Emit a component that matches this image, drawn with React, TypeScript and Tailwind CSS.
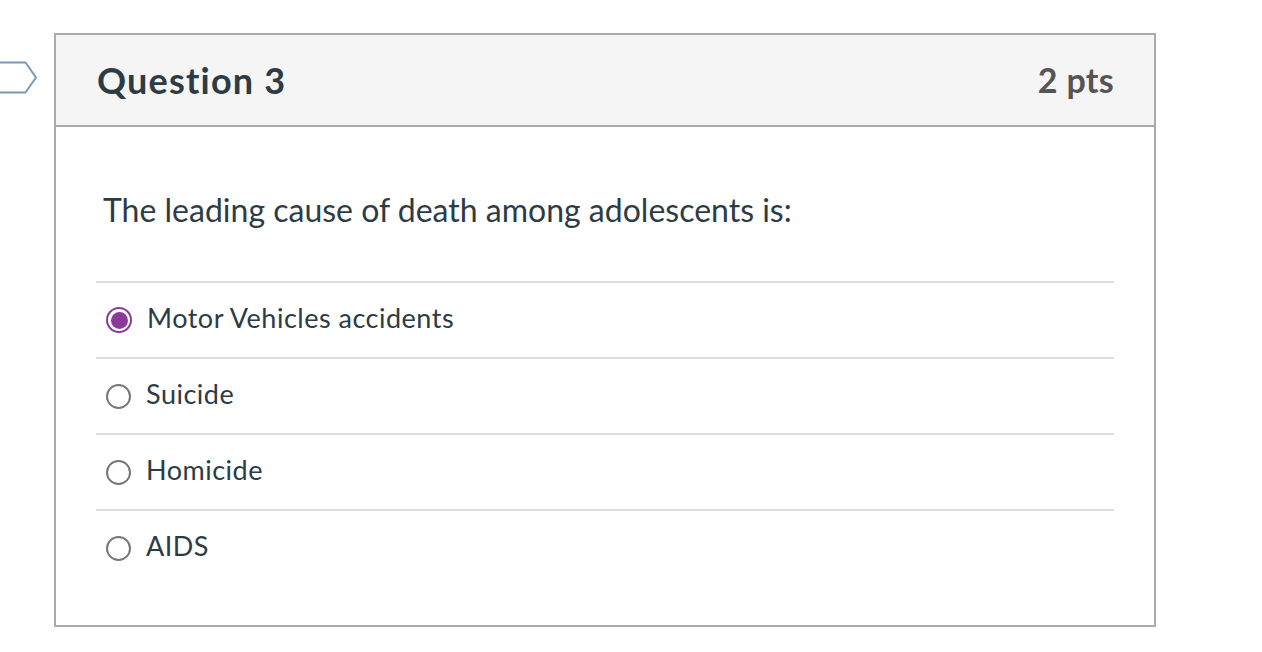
import React from 'react';

const answers = [
  { label: 'Motor Vehicles accidents', selected: true },
  { label: 'Suicide', selected: false },
  { label: 'Homicide', selected: false },
  { label: 'AIDS', selected: false },
];

function Radio({ selected }: { selected: boolean }) {
  if (selected) {
    return (
      <span className="w-[26px] h-[26px] rounded-full border-2 border-[#8b3a98] flex items-center justify-center shrink-0">
        <span className="w-[17px] h-[17px] rounded-full bg-[#8b3a98]" />
      </span>
    );
  }
  return <span className="w-[25px] h-[25px] rounded-full border-2 border-[#777777] shrink-0 bg-white" />;
}

export default function App() {
  return (
    <div className="min-h-screen bg-white pt-[33px] flex items-start font-['Lato','Liberation_Sans',sans-serif]">
      {/* question flag marker */}
      <svg className="mt-[28px] w-[38px] h-[33px] shrink-0" viewBox="0 0 38 33" fill="none">
        <path d="M-2 1.5H25.5L36 16.5L25.5 31.5H-2" fill="white" stroke="#7799b6" strokeWidth="2" strokeLinejoin="round" />
      </svg>

      <div className="ml-[16px] w-[1102px] border-2 border-[#aaaaaa]">
        <div className="h-[92px] bg-[#f5f5f5] border-b-2 border-[#aaaaaa] flex items-center justify-between pl-[41px] pr-[40px]">
          <h2 className="text-[36px] font-bold text-[#2d3b45] leading-none tracking-[1.2px]">Question 3</h2>
          <span className="text-[34px] font-bold text-[#555555] leading-none tracking-[0.3px]">2 pts</span>
        </div>

        <div className="px-[40px] pt-[60px] pb-[40px]">
          <p className="text-[32px] leading-[45px] text-[#2d3b45] pl-[7px] mb-[49px]">
            The leading cause of death among adolescents is:
          </p>
          <div>
            {answers.map((a) => (
              <div key={a.label} className="border-t-2 border-[#dddddd] h-[76px] flex items-center gap-[15px] pl-[10px]">
                <Radio selected={a.selected} />
                <span className="text-[27px] text-[#2d3b45] tracking-[0.5px] mb-[3px]">{a.label}</span>
              </div>
            ))}
          </div>
        </div>
      </div>
    </div>
  );
}
